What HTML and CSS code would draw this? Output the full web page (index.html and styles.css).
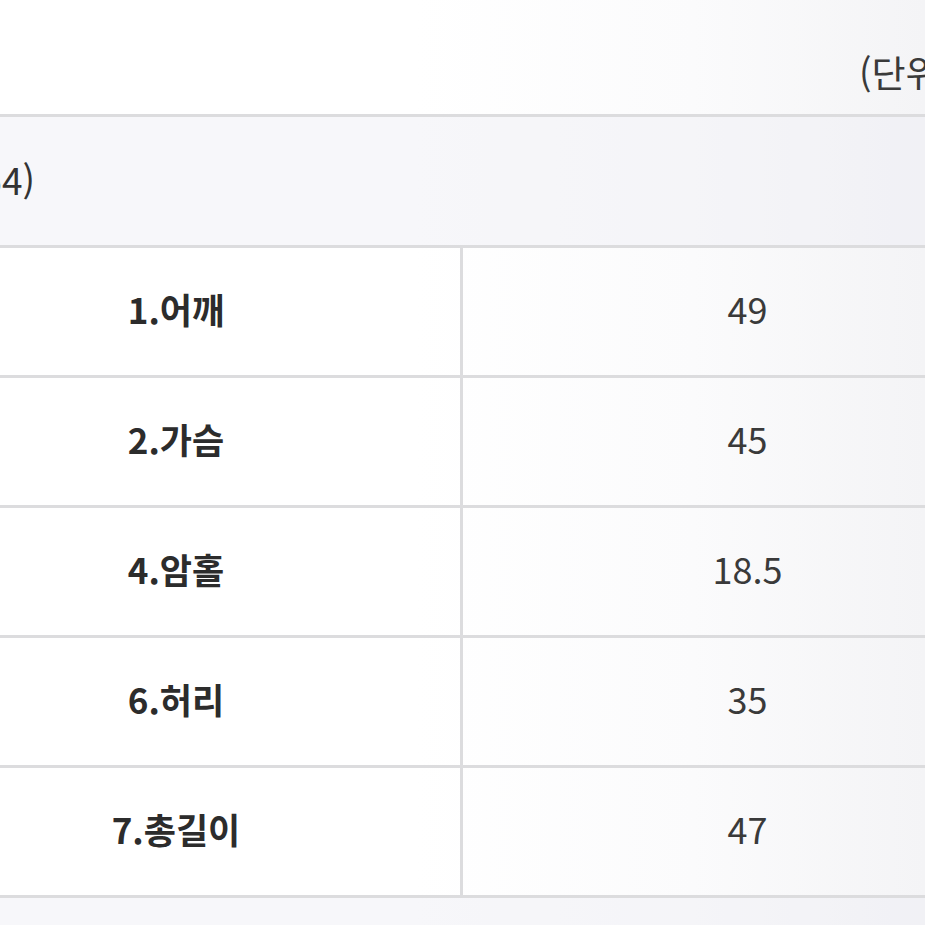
FILE: index.html
```html
<!DOCTYPE html>
<html lang="ko">
<head>
<meta charset="utf-8">
<title>사이즈 표</title>
<link rel="stylesheet" href="styles.css">
</head>
<body>
<div class="frame">
  <div class="caption"><span>(단위: cm)</span></div>
  <div class="table">
    <div class="head">
      <div class="head-label"><span>FREE(44~55~54)</span></div>
    </div>
    <div class="row"><div class="cell label">1.어깨</div><div class="cell value">49</div></div>
    <div class="row"><div class="cell label">2.가슴</div><div class="cell value">45</div></div>
    <div class="row"><div class="cell label">4.암홀</div><div class="cell value">18.5</div></div>
    <div class="row"><div class="cell label">6.허리</div><div class="cell value">35</div></div>
    <div class="row"><div class="cell label">7.총길이</div><div class="cell value">47</div></div>
    <div class="foot"></div>
  </div>
</div>
</body>
</html>
```

FILE: styles.css
```css
html, body {
  margin: 0;
  padding: 0;
  background: #ffffff;
}
.frame {
  width: 925px;
  height: 925px;
  overflow: hidden;
  background: linear-gradient(90deg, #ffffff 0%, #ffffff 45%, #fbfbfc 75%, #f4f4f6 100%);
  font-family: "Noto Sans CJK KR", "Noto Sans", sans-serif;
  color: #333333;
}
.caption {
  height: 114px;
  display: flex;
  align-items: center;
  padding-left: 859px;
  padding-top: 30px;
  box-sizing: border-box;
  font-size: 37px;
  white-space: nowrap;
  color: #3a3a3a;
}
.table {
  margin-left: -108px;
  width: 1140px;
  border-top: 3px solid #dcdcde;
}
.head {
  height: 128px;
  display: flex;
  align-items: center;
  background: rgba(238, 238, 244, 0.45);
  border-bottom: 3px solid #dcdcde;
}
.head-label {
  width: 143px;
  flex: none;
  display: flex;
  justify-content: flex-end;
  white-space: nowrap;
  font-size: 37px;
  color: #333;
  padding-bottom: 4px;
}
.row {
  display: grid;
  grid-template-columns: 571px 1fr;
  height: 127px;
  border-bottom: 3px solid #dcdcde;
}
.cell {
  display: flex;
  align-items: center;
  justify-content: center;
}
.label {
  border-right: 3px solid #dcdcde;
  font-weight: 700;
  font-size: 35px;
  color: #2c2c2c;
  padding-bottom: 6px;
}
.value {
  font-size: 36px;
  font-weight: 400;
  color: #3a3a3a;
  padding-bottom: 8px;
}
.foot {
  height: 40px;
  background: rgba(238, 238, 244, 0.45);
}
```
